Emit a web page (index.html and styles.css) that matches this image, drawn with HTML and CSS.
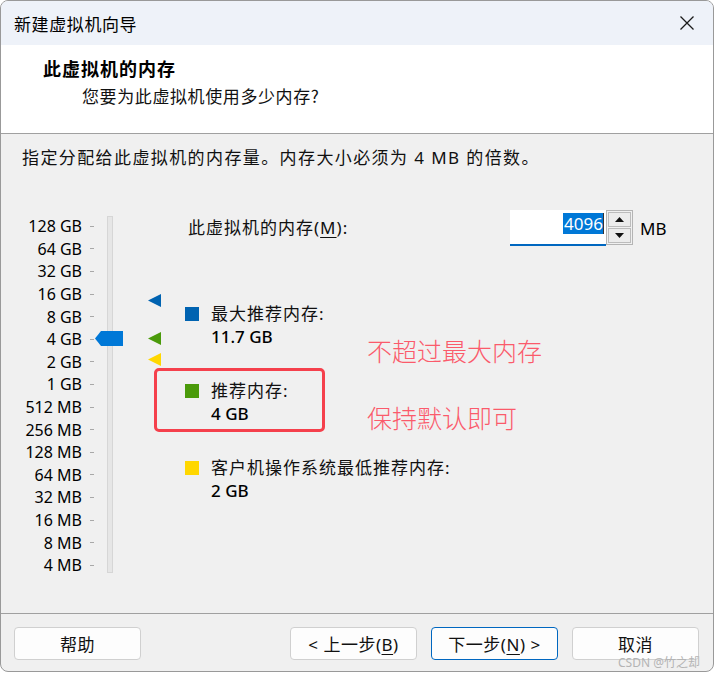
FILE: index.html
```html
<!DOCTYPE html>
<html lang="zh-CN">
<head>
<meta charset="utf-8">
<title>新建虚拟机向导</title>
<link rel="stylesheet" href="styles.css">
</head>
<body>
<div class="window">
  <div class="titlebar">
    <span class="title-text">新建虚拟机向导</span>
    <svg class="close" width="16" height="16" viewBox="0 0 16 16"><path d="M1.5 1.5 L14.5 14.5 M14.5 1.5 L1.5 14.5" stroke="#1b1b1b" stroke-width="1.3" fill="none"/></svg>
  </div>
  <div class="header">
    <div class="h-title">此虚拟机的内存</div>
    <div class="h-sub">您要为此虚拟机使用多少内存?</div>
  </div>
  <div class="content">
    <p class="intro">指定分配给此虚拟机的内存量。内存大小必须为 4 MB 的倍数。</p>
    <div class="main">
      <div class="scale">
        <div class="labels">
          <div class="row"><span class="lbl">128 GB</span><span class="tick"></span></div>
          <div class="row"><span class="lbl">64 GB</span><span class="tick"></span></div>
          <div class="row"><span class="lbl">32 GB</span><span class="tick"></span></div>
          <div class="row"><span class="lbl">16 GB</span><span class="tick"></span></div>
          <div class="row"><span class="lbl">8 GB</span><span class="tick"></span></div>
          <div class="row"><span class="lbl">4 GB</span><span class="tick"></span></div>
          <div class="row"><span class="lbl">2 GB</span><span class="tick"></span></div>
          <div class="row"><span class="lbl">1 GB</span><span class="tick"></span></div>
          <div class="row"><span class="lbl">512 MB</span><span class="tick"></span></div>
          <div class="row"><span class="lbl">256 MB</span><span class="tick"></span></div>
          <div class="row"><span class="lbl">128 MB</span><span class="tick"></span></div>
          <div class="row"><span class="lbl">64 MB</span><span class="tick"></span></div>
          <div class="row"><span class="lbl">32 MB</span><span class="tick"></span></div>
          <div class="row"><span class="lbl">16 MB</span><span class="tick"></span></div>
          <div class="row"><span class="lbl">8 MB</span><span class="tick"></span></div>
          <div class="row"><span class="lbl">4 MB</span><span class="tick"></span></div>
        </div>
        <div class="track"></div>
      </div>
      <div class="panel">
        <div class="memrow">
          <span class="cjk memlabel">此虚拟机的内存(<u>M</u>):</span>
          <span class="input"><span class="sel">4096</span></span>
          <span class="spin">
            <span class="spin-btn"><svg width="9" height="5" viewBox="0 0 9 5"><polygon points="0,5 9,5 4.5,0" fill="#111"/></svg></span>
            <span class="spin-btn"><svg width="9" height="5" viewBox="0 0 9 5"><polygon points="0,0 9,0 4.5,5" fill="#111"/></svg></span>
          </span>
          <span class="unit">MB</span>
        </div>
        <div class="legend first">
          <span class="sq sq-blue"></span>
          <div class="leg-text"><div class="cjk">最大推荐内存:</div><div class="val">11.7 GB</div></div>
        </div>
        <div class="legend">
          <span class="sq sq-green"></span>
          <div class="leg-text"><div class="cjk">推荐内存:</div><div class="val">4 GB</div></div>
        </div>
        <div class="legend">
          <span class="sq sq-yellow"></span>
          <div class="leg-text"><div class="cjk">客户机操作系统最低推荐内存:</div><div class="val">2 GB</div></div>
        </div>
      </div>
      <svg class="thumb" width="28" height="15" viewBox="0 0 28 15"><polygon points="0,7.5 6,0 28,0 28,15 6,15" fill="#0078d7"/></svg>
      <svg class="mark mark-blue" width="13" height="13" viewBox="0 0 13 13"><polygon points="0,6.5 13,0 13,13" fill="#0063b1"/></svg>
      <svg class="mark mark-green" width="13" height="13" viewBox="0 0 13 13"><polygon points="0,6.5 13,0 13,13" fill="#4a9a0a"/></svg>
      <svg class="mark mark-yellow" width="13" height="13" viewBox="0 0 13 13"><polygon points="0,6.5 13,0 13,13" fill="#ffd700"/></svg>
      <div class="redbox"></div>
      <div class="note note1">不超过最大内存</div>
      <div class="note note2">保持默认即可</div>
    </div>
  </div>
  <div class="footer">
    <button class="btn">帮助</button>
    <span class="spacer"></span>
    <button class="btn">&lt; 上一步(<u>B</u>)</button>
    <button class="btn btn-primary">下一步(<u>N</u>) &gt;</button>
    <button class="btn">取消</button>
  </div>
  <div class="watermark">CSDN @竹之却</div>
</div>
</body>
</html>
```

FILE: styles.css
```css
* { box-sizing: border-box; }
html, body { margin: 0; padding: 0; background: #ffffff; }
body {
  font-family: "Noto Sans", "Noto Sans CJK SC", sans-serif;
  color: #000;
}
.window {
  position: relative;
  width: 714px;
  height: 672px;
  border: 1px solid #999999;
  border-radius: 8px;
  overflow: hidden;
  background: #f0f0f0;
  display: flex;
  flex-direction: column;
}
.titlebar {
  height: 44px;
  flex: none;
  background: #eef2f9;
  display: flex;
  align-items: center;
  justify-content: space-between;
  padding: 0 18px 0 13px;
}
.title-text {
  font-family: "Noto Sans CJK SC", sans-serif;
  font-size: 17px;
  letter-spacing: 0.6px;
  color: #000;
}
.close { display: block; }
.header {
  flex: none;
  height: 89px;
  background: #ffffff;
  border-bottom: 1px solid #a0a0a0;
  padding: 11px 0 0 42px;
}
.h-title {
  font-family: "Noto Sans CJK SC", sans-serif;
  font-weight: bold;
  font-size: 18px;
  line-height: 24px;
  letter-spacing: 1px;
}
.h-sub {
  font-family: "Noto Sans CJK SC", sans-serif;
  font-size: 17px;
  line-height: 24px;
  letter-spacing: 0.6px;
  margin: 4px 0 0 39px;
  color: #111;
}
.content {
  flex: 1;
  padding: 0 21px;
}
.cjk { letter-spacing: 1px; }
.intro {
  margin: 13px 0 0 0;
  font-size: 17px;
  line-height: 22px;
  letter-spacing: 1.4px;
  color: #111;
}
.main {
  position: relative;
  margin-top: 41px;
  display: flex;
  align-items: flex-start;
}
.scale {
  display: flex;
  align-items: flex-start;
  padding-top: 5px;
  flex: none;
}
.labels { display: flex; flex-direction: column; }
.row {
  height: 22.6px;
  display: flex;
  align-items: center;
}
.lbl {
  width: 60px;
  text-align: right;
  font-size: 16px;
  line-height: 20px;
  white-space: nowrap;
}
.tick {
  width: 4px;
  height: 1px;
  margin-left: 8px;
  background: #a8a8a8;
}
.track {
  width: 6px;
  height: 357px;
  margin: 1px 0 0 13px;
  background: #e6e6e6;
  border: 1px solid #d6d6d6;
}
.panel {
  margin-left: 72px;
  flex: 1;
}
.memrow {
  display: flex;
  align-items: center;
  height: 36px;
}
.memlabel {
  width: 325px;
  padding-left: 3px;
  font-size: 17px;
  line-height: 22px;
  color: #111;
}
.memlabel u { text-underline-offset: 3px; }
.input {
  width: 96px;
  height: 36px;
  background: #ffffff;
  border-bottom: 2px solid #0067c0;
  display: flex;
  align-items: flex-start;
  justify-content: flex-end;
  padding: 3px 2px 0 0;
}
.sel {
  background: #0078d7;
  color: #ffffff;
  font-size: 17px;
  line-height: 21px;
  padding: 0 0 0 1px;
  border-right: 1px solid #333;
}
.spin {
  width: 27px;
  height: 35px;
  border: 1px solid #b4b4b4;
  display: flex;
  flex-direction: column;
  align-self: flex-start;
  background: #f0f0f0;
  padding: 1px;
  gap: 1px;
}
.spin-btn {
  flex: 1;
  border: 1px solid #bcbcbc;
  background: #ececec;
  display: flex;
  align-items: center;
  justify-content: center;
}
.spin-btn svg { display: block; }
.unit {
  margin-left: 7px;
  font-size: 17px;
}
.legend {
  display: flex;
  align-items: flex-start;
  margin-top: 31px;
}
.legend.first { margin-top: 56px; }
.sq {
  width: 14px;
  height: 14px;
  margin-top: 5px;
  flex: none;
}
.sq-blue { background: #0063b1; }
.sq-green { background: #4a9a0a; }
.sq-yellow { background: #ffd700; }
.leg-text {
  margin-left: 12px;
  font-size: 17px;
  line-height: 23px;
}
.leg-text .cjk { color: #111; }
.val { font-size: 17px; font-weight: 500; color: #000; }
.thumb { position: absolute; left: 73px; top: 121px; }
.mark { position: absolute; left: 126px; }
.mark-blue { top: 84px; }
.mark-green { top: 122px; }
.mark-yellow { top: 143px; }
.redbox {
  position: absolute;
  left: 132px;
  top: 158px;
  width: 171px;
  height: 64px;
  border: 3px solid #f5404c;
  border-radius: 5px;
}
.note {
  position: absolute;
  left: 345px;
  font-family: "Noto Sans CJK SC", sans-serif;
  font-size: 25px;
  line-height: 30px;
  color: #fb5a6b;
  font-weight: 300;
  white-space: nowrap;
}
.note1 { top: 125px; }
.note2 { top: 192px; }
.footer {
  flex: none;
  height: 58px;
  border-top: 1px solid #a0a0a0;
  display: flex;
  align-items: flex-start;
  padding: 13px 14px 0 13px;
  gap: 14px;
}
.spacer { flex: 1; }
.btn {
  width: 127px;
  height: 33px;
  background: #fdfdfd;
  border: 1px solid #d0d0d0;
  border-radius: 4px;
  font-family: "Noto Sans", "Noto Sans CJK SC", sans-serif;
  font-size: 17px;
  letter-spacing: 0.5px;
  color: #111;
  padding: 0;
}
.btn u { text-underline-offset: 3px; }
.btn-primary { border-color: #0067c0; }
.watermark {
  position: absolute;
  left: 617px;
  top: 652px;
  font-family: "Noto Sans", "Noto Sans CJK SC", sans-serif;
  font-size: 12px;
  color: #b4b4b4;
  white-space: nowrap;
}
```
